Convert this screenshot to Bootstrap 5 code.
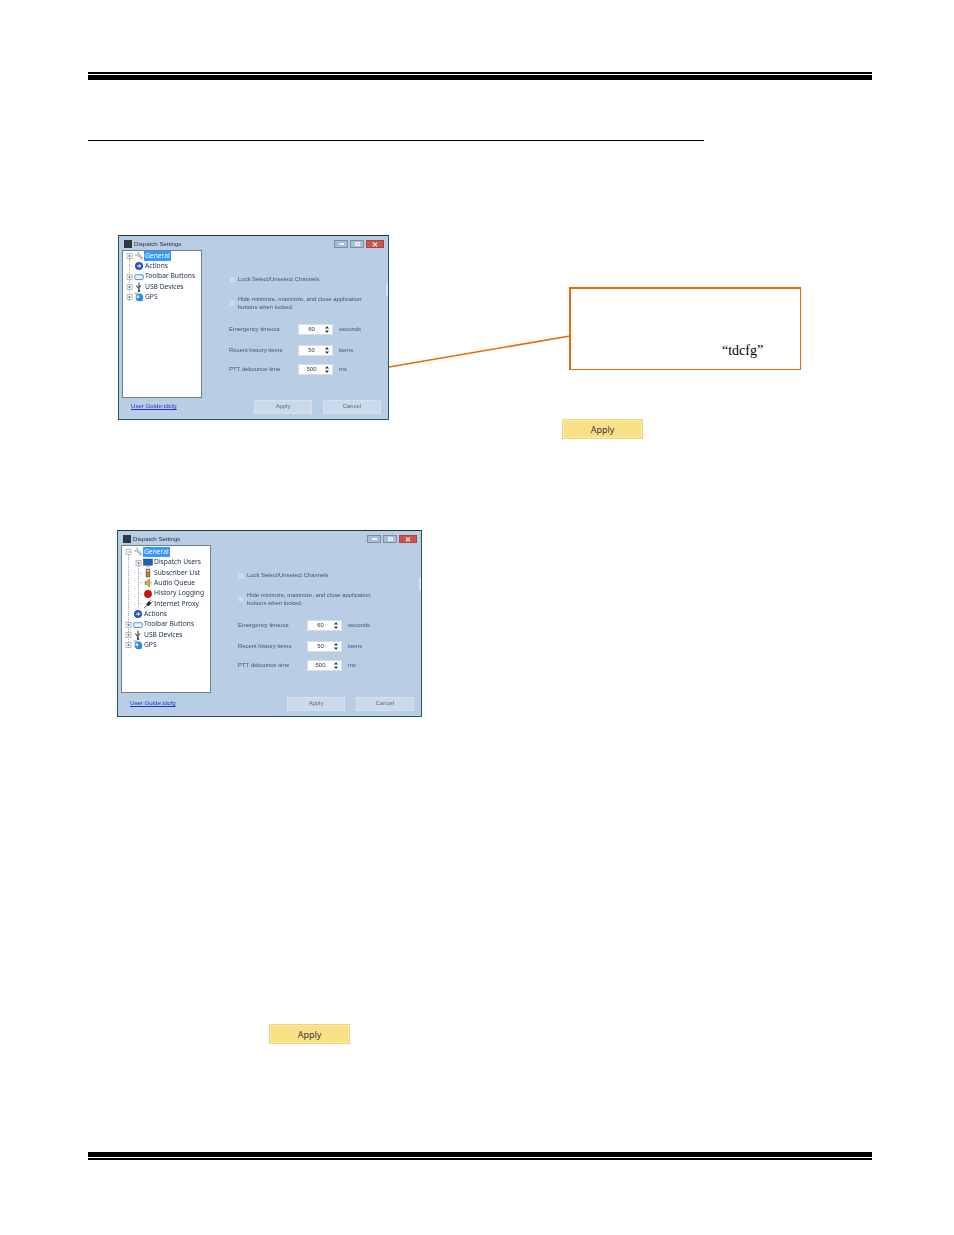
<!DOCTYPE html>
<html lang="en">
<head>
<meta charset="utf-8">
<title>Dispatch Settings</title>
<link href="https://cdn.jsdelivr.net/npm/bootstrap@5.3.0/dist/css/bootstrap.min.css" rel="stylesheet">
<style>
html,body{background:#fff;height:1235px;overflow:hidden}
.sheet{margin-left:88px;width:784px;padding-top:72px}
.rule-thin{height:2px;background:#000}
.rule-thick{height:5px;background:#000;margin-top:1px}
.rule-sec{height:1px;background:#000;width:616px;margin-top:60px}
.band-one{margin-top:94px;margin-left:30px;height:204px}
.band-two{margin-top:91px;margin-left:29px}
.dlg{background:#b9cde4;border:1px solid #1f5a6b;border-top:1px solid #26333d;font-family:"Liberation Sans",sans-serif;font-size:5.9px;line-height:1;color:#46556c;flex:none;position:relative;display:flex;flex-direction:column;filter:blur(.3px)}
.dlg-a{width:271px;height:185px}
.dlg-b{width:305px;height:187px}
.ttl{height:14px;padding:4px 4px 0 5px;color:#26303d}
.ttl-txt{margin-top:1px;font-size:6.1px}
.ttl-ico{width:8px;height:8px;background:#2b3a3a;margin-right:2px;flex:none}
.wbtns{margin-left:auto;gap:2px}
.wb{height:8px;background:#a9bfd6;border:1px solid #7b8ea6;display:flex;align-items:center;justify-content:center}
.wb i{display:block;width:5px;height:2px;background:#eef3f8}
.wb.mn,.wb.mx{width:14px}
.wb.cl{width:18px;background:#d2534c;border-color:#a5473f}
.wb.mx i{height:4px;background:#c9d7e6;border:1px solid #eef3f8}
.mid{flex:1;padding-left:3px;min-height:0}
.tree{background:#fff;border:1px solid #6f7f8e;height:148px;padding:0 0 0 3px;color:#1c2c4a;font-size:6.7px;font-family:"Noto Sans",sans-serif;flex:none;position:relative}
.dlg-a .tree{width:80px}
.dlg-b .tree{width:90px;padding-top:1px}
.tn{height:10.3px;display:flex;align-items:center;white-space:nowrap;position:relative}
.dlg-b .tn{height:10.35px}
.tn svg{flex:none}
.sel{background:#3399ff;color:#fff;height:10px;line-height:10px;padding:0 1px}
.nosel{padding:0 1px}
.tn-sub{padding-left:10px}
.guide{position:absolute;width:0;border-left:1px dotted #a0a8b0}
.guide-a{left:6px;top:8px;height:42px}
.guide-b{left:6px;top:8px;height:92px}
.guide-c{left:16px;top:14px;height:47px}
.form{padding-left:27px;padding-top:27px;flex:1;position:relative}
.dlg-b .form{padding-top:28px}
.chk{display:flex;gap:3px;align-items:flex-start;height:8px}
.box{width:6px;height:6px;background:#cfdbe9;border:1px solid #c6d3e3;flex:none}
.chk-2{margin-top:10px;height:16px;line-height:8px;align-items:center}
.frow{display:flex;align-items:center;height:11px;margin-top:8px}
.frow.first{margin-top:13px}
.frow.wide{margin-top:10px}
.flab{width:69px;flex:none}
.spin{width:35px;height:11px;background:#fff;border:1px solid #d4dfec;display:flex;align-items:center;justify-content:center;position:relative;margin-right:6px;color:#333;padding-right:8px;flex:none}
.arr{position:absolute;right:3px;top:1px;display:block}
.scrollmark{position:absolute;right:0;top:33px;width:2px;height:13px;background:#d7e3f0}
.foot{height:22px;padding:3px 7px 0 12px;align-items:flex-start}
.ug{color:#2430c8;text-decoration:underline;margin-top:3px;font-size:6.1px}
.foot-btns{margin-left:auto;gap:11px}
.wbtn{width:58px;height:14px;background:#cbdaea;border:1px solid #d6e1ed;color:#5c6a7d;display:flex;align-items:center;justify-content:center}
.callout{width:232px;height:83px;border:1px solid #e36c0a;border-top-width:2px;border-left-width:2px;background:#fff;font-family:"Liberation Serif",serif;font-size:14px;line-height:1;color:#000;padding:55px 0 0 151px}
.side{margin-left:180px;margin-top:52px}
.apply-y{width:81px;height:20px;background:#fae085;border:1px solid #ecd27a;box-shadow:inset 0 0 0 1px #fcebb0;font-family:"Noto Sans",sans-serif;font-size:9px;line-height:1;color:#3b3440;display:flex;align-items:center;justify-content:center}
.side .apply-y{margin-top:49px;margin-left:-7px}
.apply-b{margin-top:307px;margin-left:152px}
.lead{position:absolute;left:271px;top:101px;overflow:visible}
.rule-foot{margin-top:108px}
.rule-foot .rule-thick{margin-top:0}
.rule-foot .rule-thin{margin-top:1px}
</style>
</head>
<body>
<svg width="0" height="0" class="position-absolute" aria-hidden="true">
<defs>
<symbol id="i-exp" viewBox="0 0 8 10"><rect x="1" y="2.5" width="5" height="5" fill="#fff" stroke="#a8adb3" stroke-width=".8"/><path d="M2.2 5h2.6M3.5 3.7v2.6" stroke="#56606c" stroke-width=".7"/><path d="M6 5h2" stroke="#a8adb3" stroke-width=".8" stroke-dasharray="1 1"/></symbol>
<symbol id="i-col" viewBox="0 0 8 10"><rect x="1" y="2.5" width="5" height="5" fill="#fff" stroke="#a8adb3" stroke-width=".8"/><path d="M2.2 5h2.6" stroke="#56606c" stroke-width=".7"/><path d="M6 5h2" stroke="#a8adb3" stroke-width=".8" stroke-dasharray="1 1"/></symbol>
<symbol id="i-lin" viewBox="0 0 8 10"><path d="M3.5 5H8" stroke="#a8adb3" stroke-width=".8" stroke-dasharray="1 1"/></symbol>
<symbol id="i-gen" viewBox="0 0 10 10"><circle cx="2" cy="4" r=".8" fill="#8c97a3"/><circle cx="4" cy="1.5" r=".8" fill="#8c97a3"/><path d="M3.2 3.5 5 2.8 9 7 8 8.6 4.5 5.4z" fill="#c3cbd3" stroke="#8a95a1" stroke-width=".5"/></symbol>
<symbol id="i-act" viewBox="0 0 10 10"><circle cx="5" cy="5" r="4" fill="#2c55b8"/><path d="M3 5h3.4M5 3.4 6.8 5 5 6.6" stroke="#fff" stroke-width="1" fill="none"/></symbol>
<symbol id="i-tool" viewBox="0 0 10 10"><rect x=".7" y="2.7" width="8.6" height="4.8" rx="1.2" fill="#e4f0fa" stroke="#3d7fb5" stroke-width=".8"/></symbol>
<symbol id="i-usb" viewBox="0 0 10 10"><path d="M5 .7v8.6M5 6.5 2.8 4.6V3.4M5 5.2 7.2 3.6" stroke="#111" stroke-width=".9" fill="none"/><circle cx="5" cy="9" r=".9" fill="#111"/></symbol>
<symbol id="i-gps" viewBox="0 0 10 10"><circle cx="5.4" cy="5.4" r="3.8" fill="#2f8fdc"/><path d="M3 3 5.5 4 4.5 6.4 2.5 5.5z" fill="#dff0fa"/><path d="M.8 1.5 3 3.4M1 .8 4 1" stroke="#7f8a96" stroke-width=".8"/><path d="M7 7.5l1.6 1.4" stroke="#0f5ea6" stroke-width="1"/></symbol>
<symbol id="i-usr" viewBox="0 0 10 10"><rect x=".5" y="1" width="9" height="6.2" fill="#1d63b5" stroke="#123e77" stroke-width=".5"/><path d="M3 8.7h4" stroke="#a7b0ba" stroke-width=".9"/></symbol>
<symbol id="i-sub" viewBox="0 0 10 10"><rect x="2.8" y=".8" width="4.4" height="8.4" rx=".8" fill="#8b5a2b"/><rect x="3.7" y="1.8" width="2.6" height="2" fill="#e8c890"/><path d="M3.7 5h2.6M3.7 6.4h2.6M3.7 7.8h2.6" stroke="#e8b56a" stroke-width=".6"/></symbol>
<symbol id="i-aud" viewBox="0 0 10 10"><path d="M6.5 1 3.5 3.6H2v2.8h1.5l3 2.6z" fill="#d9b23c" stroke="#6f5a1c" stroke-width=".5"/><path d="M8 3.5v3" stroke="#7f8a96" stroke-width=".7"/></symbol>
<symbol id="i-his" viewBox="0 0 10 10"><circle cx="5" cy="5" r="3.9" fill="#c8120c"/></symbol>
<symbol id="i-pxy" viewBox="0 0 10 10"><path d="M1 9 4 6 3.2 5l3-3 2.2 2.2-3 3-1-.8-3 3z" fill="#26282c"/><path d="M6.6 2 8 .7M8.4 3.6 9.6 2.3" stroke="#26282c" stroke-width=".8"/></symbol>
<symbol id="i-x" viewBox="0 0 6 5"><path d="M1 .5 5 4.5M5 .5 1 4.5" stroke="#f6e4e2" stroke-width="1.1"/></symbol>
</defs>
</svg>

<main class="sheet">
  <div class="rule-thin"></div>
  <div class="rule-thick"></div>
  <div class="rule-sec"></div>

  <section class="band-one d-flex position-relative">
    <div class="dlg dlg-a">
      <div class="ttl d-flex align-items-start">
        <span class="ttl-ico"></span><span class="ttl-txt">Dispatch Settings</span>
        <span class="wbtns d-flex"><span class="wb mn"><i></i></span><span class="wb mx"><i></i></span><span class="wb cl"><svg width="6" height="5"><use href="#i-x"/></svg></span></span>
      </div>
      <div class="mid d-flex">
        <div class="tree">
          <span class="guide guide-a"></span>
          <div class="tn"><svg width="8" height="10"><use href="#i-exp"/></svg><svg width="10" height="10"><use href="#i-gen"/></svg><span class="sel">General</span></div>
          <div class="tn"><svg width="8" height="10"><use href="#i-lin"/></svg><svg width="10" height="10"><use href="#i-act"/></svg><span class="nosel">Actions</span></div>
          <div class="tn"><svg width="8" height="10"><use href="#i-exp"/></svg><svg width="10" height="10"><use href="#i-tool"/></svg><span class="nosel">Toolbar Buttons</span></div>
          <div class="tn"><svg width="8" height="10"><use href="#i-exp"/></svg><svg width="10" height="10"><use href="#i-usb"/></svg><span class="nosel">USB Devices</span></div>
          <div class="tn"><svg width="8" height="10"><use href="#i-exp"/></svg><svg width="10" height="10"><use href="#i-gps"/></svg><span class="nosel">GPS</span></div>
        </div>
        <div class="form">
          <div class="chk"><span class="box"></span><span>Lock Select/Unselect Channels</span></div>
          <div class="chk chk-2"><span class="box"></span><span>Hide minimize, maximize, and close application<br>buttons when locked.</span></div>
          <div class="frow first"><span class="flab">Emergency timeout</span><span class="spin">60<svg class="arr" width="4" height="7"><path d="M2 0 4 2.4H0zM2 7 0 4.6h4z" fill="#333"/></svg></span><span>seconds</span></div>
          <div class="frow wide"><span class="flab">Recent history items</span><span class="spin">50<svg class="arr" width="4" height="7"><path d="M2 0 4 2.4H0zM2 7 0 4.6h4z" fill="#333"/></svg></span><span>items</span></div>
          <div class="frow"><span class="flab">PTT debounce time</span><span class="spin">500<svg class="arr" width="4" height="7"><path d="M2 0 4 2.4H0zM2 7 0 4.6h4z" fill="#333"/></svg></span><span>ms</span></div>
          <span class="scrollmark"></span>
        </div>
      </div>
      <div class="foot d-flex">
        <a class="ug" href="#">User Guide:tdcfg</a>
        <div class="foot-btns d-flex"><span class="wbtn">Apply</span><span class="wbtn">Cancel</span></div>
      </div>
    </div>
    <svg class="lead" width="182" height="32"><line x1="0" y1="31" x2="181" y2="0" stroke="#e36c0a" stroke-width="1.5"/></svg>
    <div class="side">
      <div class="callout">“tdcfg”</div>
      <div class="apply-y">Apply</div>
    </div>
  </section>

  <section class="band-two">
    <div class="dlg dlg-b">
      <div class="ttl d-flex align-items-start">
        <span class="ttl-ico"></span><span class="ttl-txt">Dispatch Settings</span>
        <span class="wbtns d-flex"><span class="wb mn"><i></i></span><span class="wb mx"><i></i></span><span class="wb cl"><svg width="6" height="5"><use href="#i-x"/></svg></span></span>
      </div>
      <div class="mid d-flex">
        <div class="tree">
          <span class="guide guide-b"></span>
          <span class="guide guide-c"></span>
          <div class="tn"><svg width="8" height="10"><use href="#i-col"/></svg><svg width="10" height="10"><use href="#i-gen"/></svg><span class="sel">General</span></div>
          <div class="tn tn-sub"><svg width="8" height="10"><use href="#i-exp"/></svg><svg width="10" height="10"><use href="#i-usr"/></svg><span class="nosel">Dispatch Users</span></div>
          <div class="tn tn-sub"><svg width="8" height="10"><use href="#i-lin"/></svg><svg width="10" height="10"><use href="#i-sub"/></svg><span class="nosel">Subscriber List</span></div>
          <div class="tn tn-sub"><svg width="8" height="10"><use href="#i-lin"/></svg><svg width="10" height="10"><use href="#i-aud"/></svg><span class="nosel">Audio Queue</span></div>
          <div class="tn tn-sub"><svg width="8" height="10"><use href="#i-lin"/></svg><svg width="10" height="10"><use href="#i-his"/></svg><span class="nosel">History Logging</span></div>
          <div class="tn tn-sub"><svg width="8" height="10"><use href="#i-lin"/></svg><svg width="10" height="10"><use href="#i-pxy"/></svg><span class="nosel">Internet Proxy</span></div>
          <div class="tn"><svg width="8" height="10"><use href="#i-lin"/></svg><svg width="10" height="10"><use href="#i-act"/></svg><span class="nosel">Actions</span></div>
          <div class="tn"><svg width="8" height="10"><use href="#i-exp"/></svg><svg width="10" height="10"><use href="#i-tool"/></svg><span class="nosel">Toolbar Buttons</span></div>
          <div class="tn"><svg width="8" height="10"><use href="#i-exp"/></svg><svg width="10" height="10"><use href="#i-usb"/></svg><span class="nosel">USB Devices</span></div>
          <div class="tn"><svg width="8" height="10"><use href="#i-exp"/></svg><svg width="10" height="10"><use href="#i-gps"/></svg><span class="nosel">GPS</span></div>
        </div>
        <div class="form">
          <div class="chk"><span class="box"></span><span>Lock Select/Unselect Channels</span></div>
          <div class="chk chk-2"><span class="box"></span><span>Hide minimize, maximize, and close application<br>buttons when locked.</span></div>
          <div class="frow first"><span class="flab">Emergency timeout</span><span class="spin">60<svg class="arr" width="4" height="7"><path d="M2 0 4 2.4H0zM2 7 0 4.6h4z" fill="#333"/></svg></span><span>seconds</span></div>
          <div class="frow wide"><span class="flab">Recent history items</span><span class="spin">50<svg class="arr" width="4" height="7"><path d="M2 0 4 2.4H0zM2 7 0 4.6h4z" fill="#333"/></svg></span><span>items</span></div>
          <div class="frow"><span class="flab">PTT debounce time</span><span class="spin">500<svg class="arr" width="4" height="7"><path d="M2 0 4 2.4H0zM2 7 0 4.6h4z" fill="#333"/></svg></span><span>ms</span></div>
          <span class="scrollmark"></span>
        </div>
      </div>
      <div class="foot d-flex">
        <a class="ug" href="#">User Guide:tdcfg</a>
        <div class="foot-btns d-flex"><span class="wbtn">Apply</span><span class="wbtn">Cancel</span></div>
      </div>
    </div>
    <div class="apply-y apply-b">Apply</div>
  </section>

  <div class="rule-foot">
    <div class="rule-thick"></div>
    <div class="rule-thin"></div>
  </div>
</main>
<script src="https://cdn.jsdelivr.net/npm/bootstrap@5.3.0/dist/js/bootstrap.bundle.min.js"></script>
</body>
</html>
